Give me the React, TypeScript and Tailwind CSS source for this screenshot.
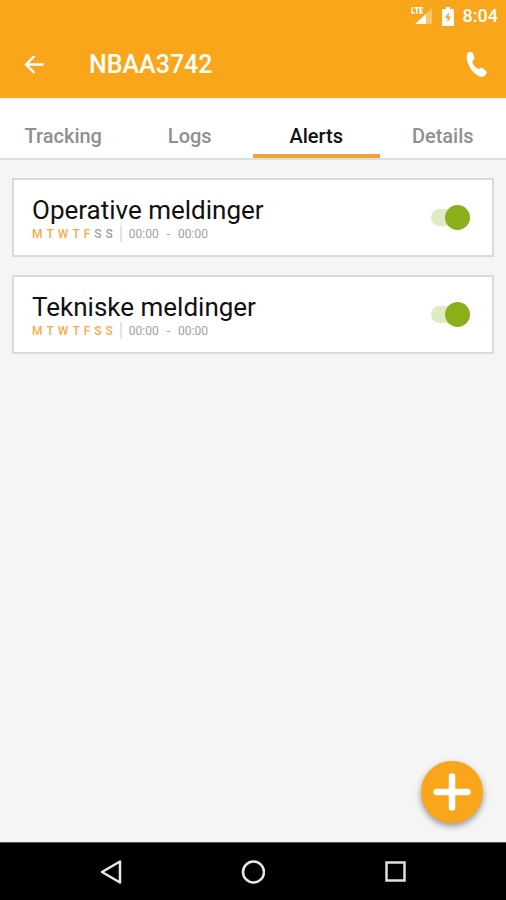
import React, { useState } from "react";
import clsx from "clsx";

type Alert = {
    id: number;
    title: string;
    activeDays: number; // Days switched on, counted from Monday
    from: string;
    to: string;
    enabled: boolean;
};

const DAYS = ["M", "T", "W", "T", "F", "S", "S"];
const TABS = ["Tracking", "Logs", "Alerts", "Details"];

const initialAlerts: Alert[] = [
    { id: 1, title: "Operative meldinger", activeDays: 5, from: "00:00", to: "00:00", enabled: true },
    { id: 2, title: "Tekniske meldinger", activeDays: 7, from: "00:00", to: "00:00", enabled: true },
];

const StatusBar = () => (
    <div className="flex h-8 items-center justify-end pr-2 text-white">
        <svg width="24" height="20" viewBox="0 0 24 20" className="mr-2">
            <path d="M22 2v16H5z" fill="#fff" opacity="0.35" />
            <path d="M16 8v10H5z" fill="#fff" />
            <path
                d="M2 1v6h3M4 1.700h5M6.700 1.700v6M13 1.700h-3v5.300h3M10 4.400h2.500"
                fill="none"
                stroke="#fff"
                strokeWidth="1.500"
            />
        </svg>
        <svg width="12" height="19" viewBox="0 0 12 19" className="mr-[9px]">
            <path d="M4 0h4v2h3a1 1 0 0 1 1 1v15a1 1 0 0 1-1 1H1a1 1 0 0 1-1-1V3a1 1 0 0 1 1-1h3z" fill="#fff" />
            <path d="M7 5L3 11h2.500v4.500L9 9.500H6.500z" fill="#faa61a" />
        </svg>
        <span className="text-[18px] font-medium leading-5">8:04</span>
    </div>
);

const AppBar = () => (
    <div className="flex h-[66px] items-center pr-[18px] pl-[23px] text-white">
        <button aria-label="Back">
            <svg width="22" height="22" viewBox="0 0 22 22" fill="none" stroke="#fff" strokeWidth="2.400">
                <path d="M20.500 10.500H3M11.500 2L3 10.500l8.500 8.500" />
            </svg>
        </button>
        <h1 className="ml-11 flex-1 text-[25px] leading-8 font-medium">NBAA3742</h1>
        <button aria-label="Call">
            <svg width="22" height="28" viewBox="0 0 22 28" fill="#fff">
                <path d="M2.200 1.500C4 .3 6.300.8 7 2.500l1.300 4c.4 1.300-.2 2.400-1.800 3.300-.5 3 3 7.500 6.200 8.200 1.300-1.300 2.600-1.600 3.700-.9l3.200 2.400c1.500 1.100 1.300 2.800.1 4.200-1.600 2-4.200 2.700-6.700 1.500C6.500 22 1.200 14.500.7 6.500.6 4.300.8 2.500 2.200 1.500z" />
            </svg>
        </button>
    </div>
);

const AlertCard = ({ alert, onToggle }: { alert: Alert; onToggle: () => void }) => {
    const inputId = `alert-${alert.id}`;

    return (
        <li className="flex h-[79px] items-center justify-between border-2 border-[#dadada] bg-white pr-[22px] pl-[18px]">
            <div className="pt-1">
                <label htmlFor={inputId} className="block text-[26px] leading-7 text-[#111]">
                    {alert.title}
                </label>
                <div className="flex h-5 items-center text-xs text-[#a0a0a0]">
                    <div className="flex gap-1 font-medium">
                        {DAYS.map((day, i) => (
                            <span key={i} className={clsx(i < alert.activeDays && "text-[#f9ab48]")}>
                                {day}
                            </span>
                        ))}
                    </div>
                    <div className="mx-[7px] h-[17px] w-0.5 bg-[#e4e4e4]" />
                    <div className="flex gap-2">
                        <span>{alert.from}</span>
                        <span>-</span>
                        <span>{alert.to}</span>
                    </div>
                </div>
            </div>
            <input
                id={inputId}
                type="checkbox"
                role="switch"
                checked={alert.enabled}
                onChange={onToggle}
                className="relative h-[25px] w-[39px] cursor-pointer appearance-none before:absolute before:inset-x-0 before:top-1 before:h-[17px] before:rounded-full before:bg-[#d4d4d4] after:absolute after:top-0 after:left-0 after:size-[25px] after:rounded-full after:bg-[#f1f1f1] checked:before:bg-[#dfebc2] checked:after:left-[14px] checked:after:bg-[#8aaf1b]"
            />
        </li>
    );
};

const NavBar = () => (
    <nav className="flex h-[58px] items-center justify-center gap-[118px] border-t border-[#555] bg-black">
        <button aria-label="Back">
            <svg width="24" height="26" viewBox="0 0 24 26" fill="none" stroke="#e8e8e8" strokeWidth="2.500">
                <path d="M21 2.500v21L3 13z" strokeLinejoin="round" />
            </svg>
        </button>
        <button aria-label="Home">
            <svg width="24" height="26" viewBox="0 0 24 26" fill="none" stroke="#e8e8e8" strokeWidth="2.500">
                <circle cx="12.500" cy="13" r="10.500" />
            </svg>
        </button>
        <button aria-label="Recent apps">
            <svg width="24" height="26" viewBox="0 0 24 26" fill="none" stroke="#e0e0e0" strokeWidth="2.500">
                <rect x="3.500" y="3.500" width="18" height="18" />
            </svg>
        </button>
    </nav>
);

export default function App() {
    const [alerts, setAlerts] = useState<Alert[]>(initialAlerts);
    const [activeTab, setActiveTab] = useState("Alerts");

    const toggleAlert = (id: number) => {
        setAlerts((prev) => prev.map((a) => (a.id === id ? { ...a, enabled: !a.enabled } : a)));
    };

    return (
        <div className="flex min-h-screen flex-col bg-[#f5f5f5] font-['Roboto',sans-serif]">
            <header className="bg-[#faa61a]">
                <StatusBar />
                <AppBar />
            </header>
            <div role="tablist" className="grid h-[62px] grid-cols-4 border-b-2 border-[#dedede] bg-white">
                {TABS.map((tab) => (
                    <button
                        key={tab}
                        role="tab"
                        aria-selected={tab === activeTab}
                        onClick={() => setActiveTab(tab)}
                        className={clsx(
                            "border-b-4 pt-5 text-xl leading-6 font-medium",
                            tab === activeTab ? "border-[#f3a333] text-[#111]" : "border-transparent text-[#8f8f8f]"
                        )}
                    >
                        {tab}
                    </button>
                ))}
            </div>
            <main className="relative flex-1 px-3 pt-[18px] pb-24">
                <ul className="flex flex-col gap-[18px]">
                    {alerts.map((alert) => (
                        <AlertCard key={alert.id} alert={alert} onToggle={() => toggleAlert(alert.id)} />
                    ))}
                </ul>
                <button
                    aria-label="Add alert"
                    className="absolute right-[23px] bottom-[19px] flex size-[62px] items-center justify-center rounded-full bg-[#faa61a] shadow-[0_3px_6px_rgba(0,0,0,0.4)]"
                >
                    <svg width="40" height="40" viewBox="0 0 40 40" stroke="#fff" strokeWidth="6.500" strokeLinecap="round">
                        <path d="M20 4.500v31M4.500 20h31" />
                    </svg>
                </button>
            </main>
            <NavBar />
        </div>
    );
}
